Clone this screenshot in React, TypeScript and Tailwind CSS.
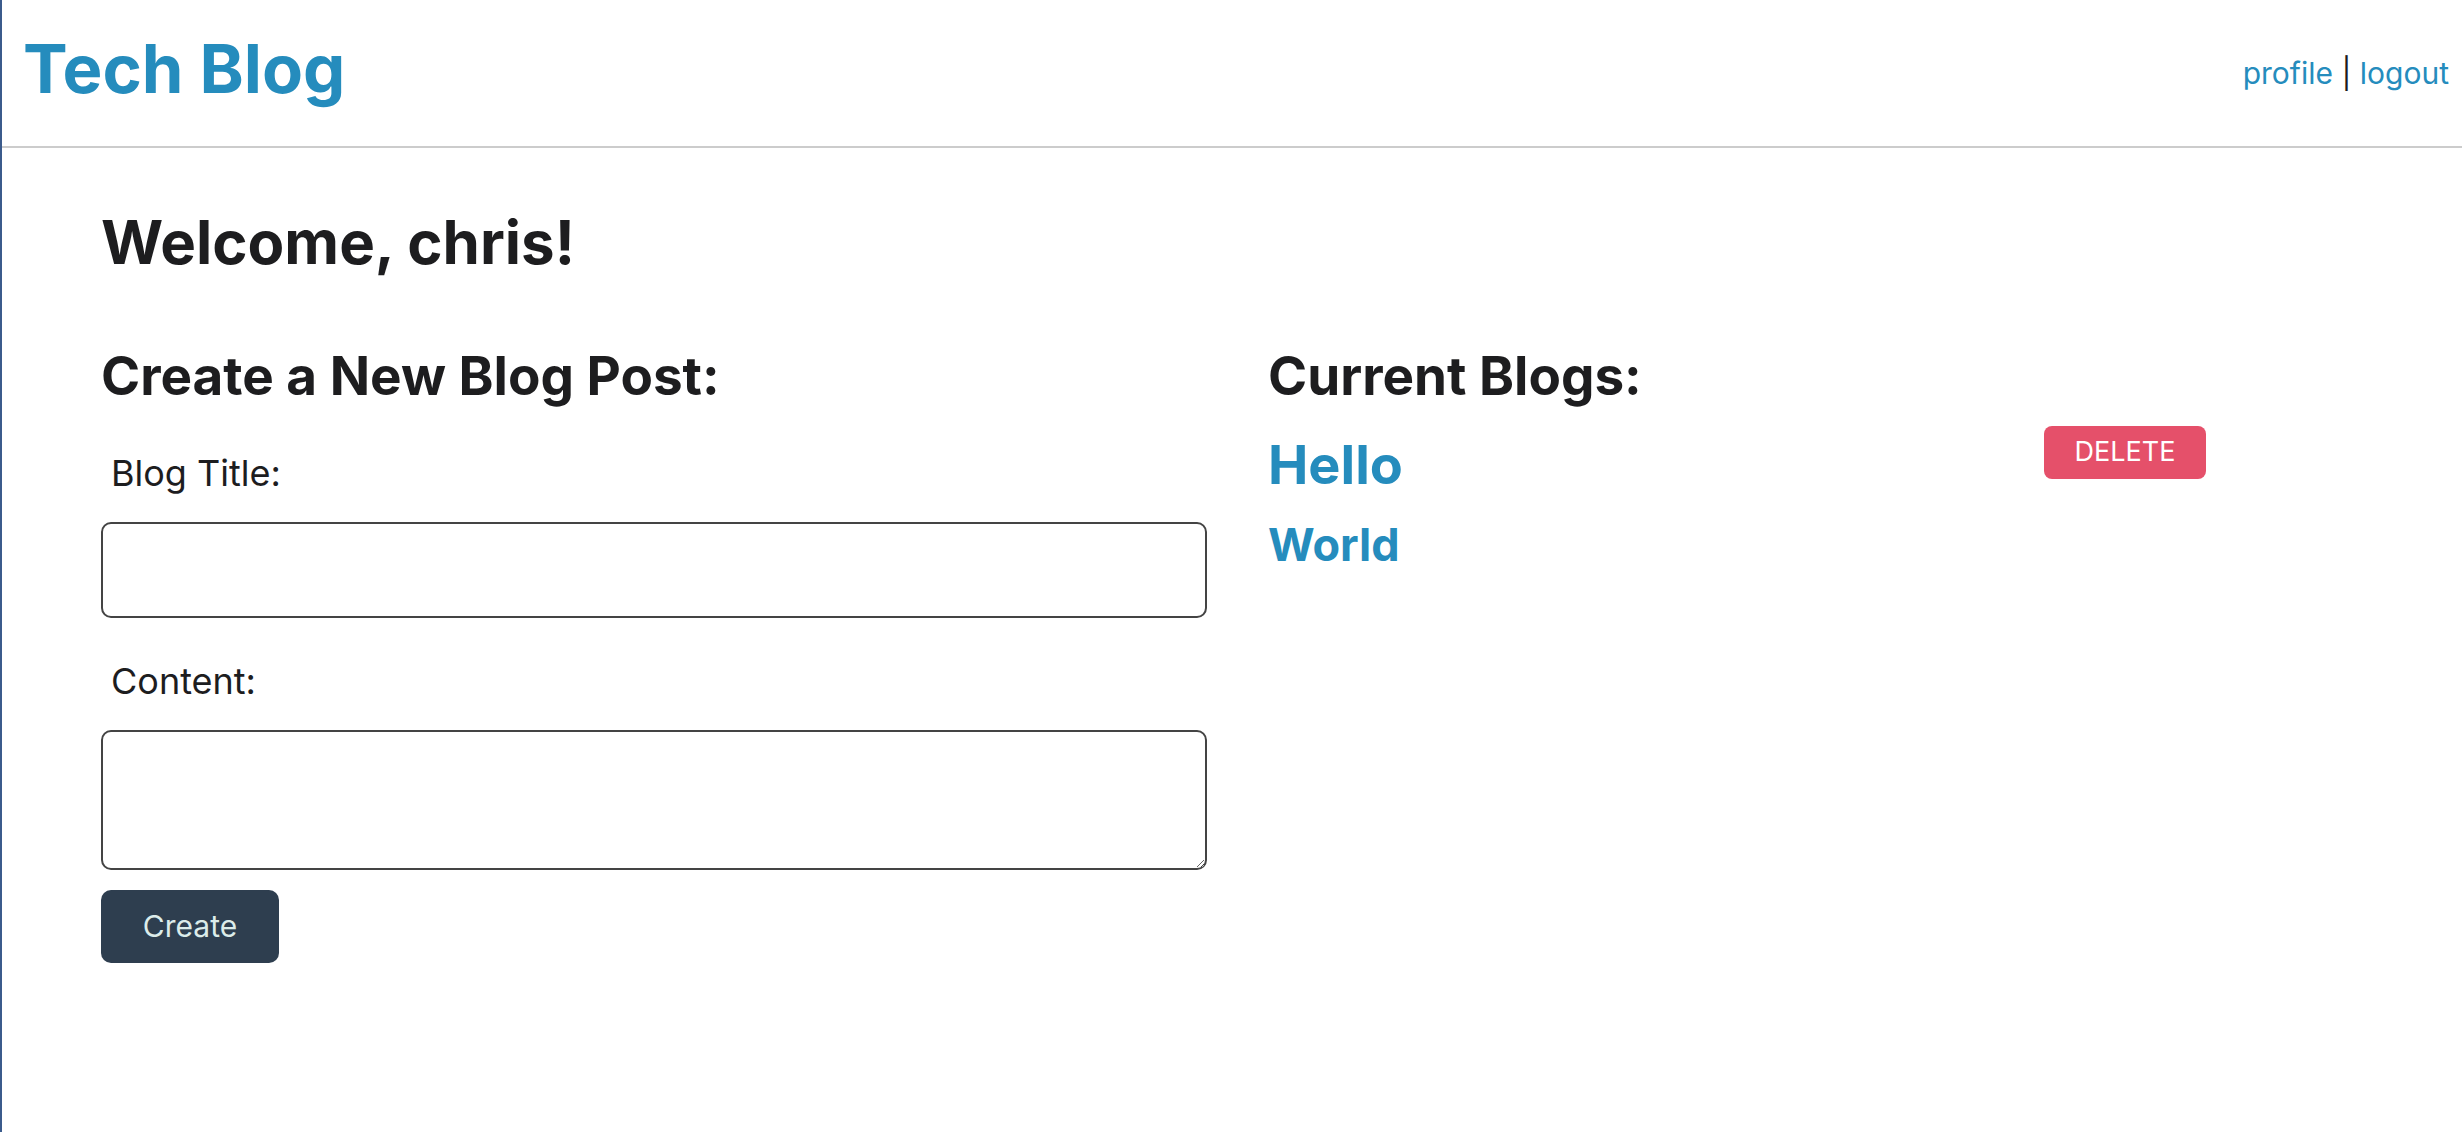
const blogs = [
  { title: "Hello", size: "text-[54px]", deletable: true },
  { title: "World", size: "text-[45px]", deletable: false },
];

export default function App() {
  return (
    <div className="min-h-[1132px] border-l-2 border-[#3b5b8c] bg-white font-['Inter',sans-serif] text-[#1d1d1f]">
      <header className="flex h-[148px] items-center justify-between border-b-2 border-[#cccccc] pl-[21px] pr-[13px]">
        <h1 className="pb-[10px] text-[67px] font-bold leading-none text-[#258cbd]">Tech Blog</h1>
        <nav className="text-[30px] leading-none">
          <a className="text-[#258cbd]">profile</a>
          <span> | </span>
          <a className="text-[#258cbd]">logout</a>
        </nav>
      </header>

      <main className="px-[99px] pt-[58px]">
        <h2 className="text-[60px] font-bold leading-[1.2]">Welcome, chris!</h2>

        <div className="mt-[67px] grid grid-cols-[1106px_1fr] gap-[61px]">
          <section>
            <h3 className="text-[53px] font-bold leading-[1.2]">Create a New Blog Post:</h3>
            <form className="mt-[43px] flex flex-col">
              <label className="pl-[10px] text-[36px] leading-[1.2]">Blog Title:</label>
              <input className="mt-[27px] h-[96px] rounded-[10px] border-2 border-[#444444] px-3 text-[30px]" />
              <label className="mt-[42px] pl-[10px] text-[36px] leading-[1.2]">Content:</label>
              <textarea className="mt-[27px] h-[140px] resize-y rounded-[10px] border-2 border-[#444444] px-3 text-[30px]" />
              <button
                type="button"
                className="mt-[20px] h-[73px] w-[178px] rounded-[10px] bg-[#2e3e4f] text-[30px] text-[#dcecea]"
              >
                Create
              </button>
            </form>
          </section>

          <section>
            <h3 className="text-[53px] font-bold leading-[1.2]">Current Blogs:</h3>
            <ul className="mt-[15px] flex w-[938px] flex-col gap-[6px]">
              {blogs.map((blog) => (
                <li key={blog.title} className="flex items-start justify-between">
                  <a className={`${blog.size} font-bold leading-[1.5] text-[#258cbd]`}>{blog.title}</a>
                  {blog.deletable && (
                    <button
                      type="button"
                      className="mt-[2px] h-[53px] w-[162px] rounded-[8px] bg-[#e5506a] text-[27px] uppercase text-white"
                    >
                      Delete
                    </button>
                  )}
                </li>
              ))}
            </ul>
          </section>
        </div>
      </main>
    </div>
  );
}
